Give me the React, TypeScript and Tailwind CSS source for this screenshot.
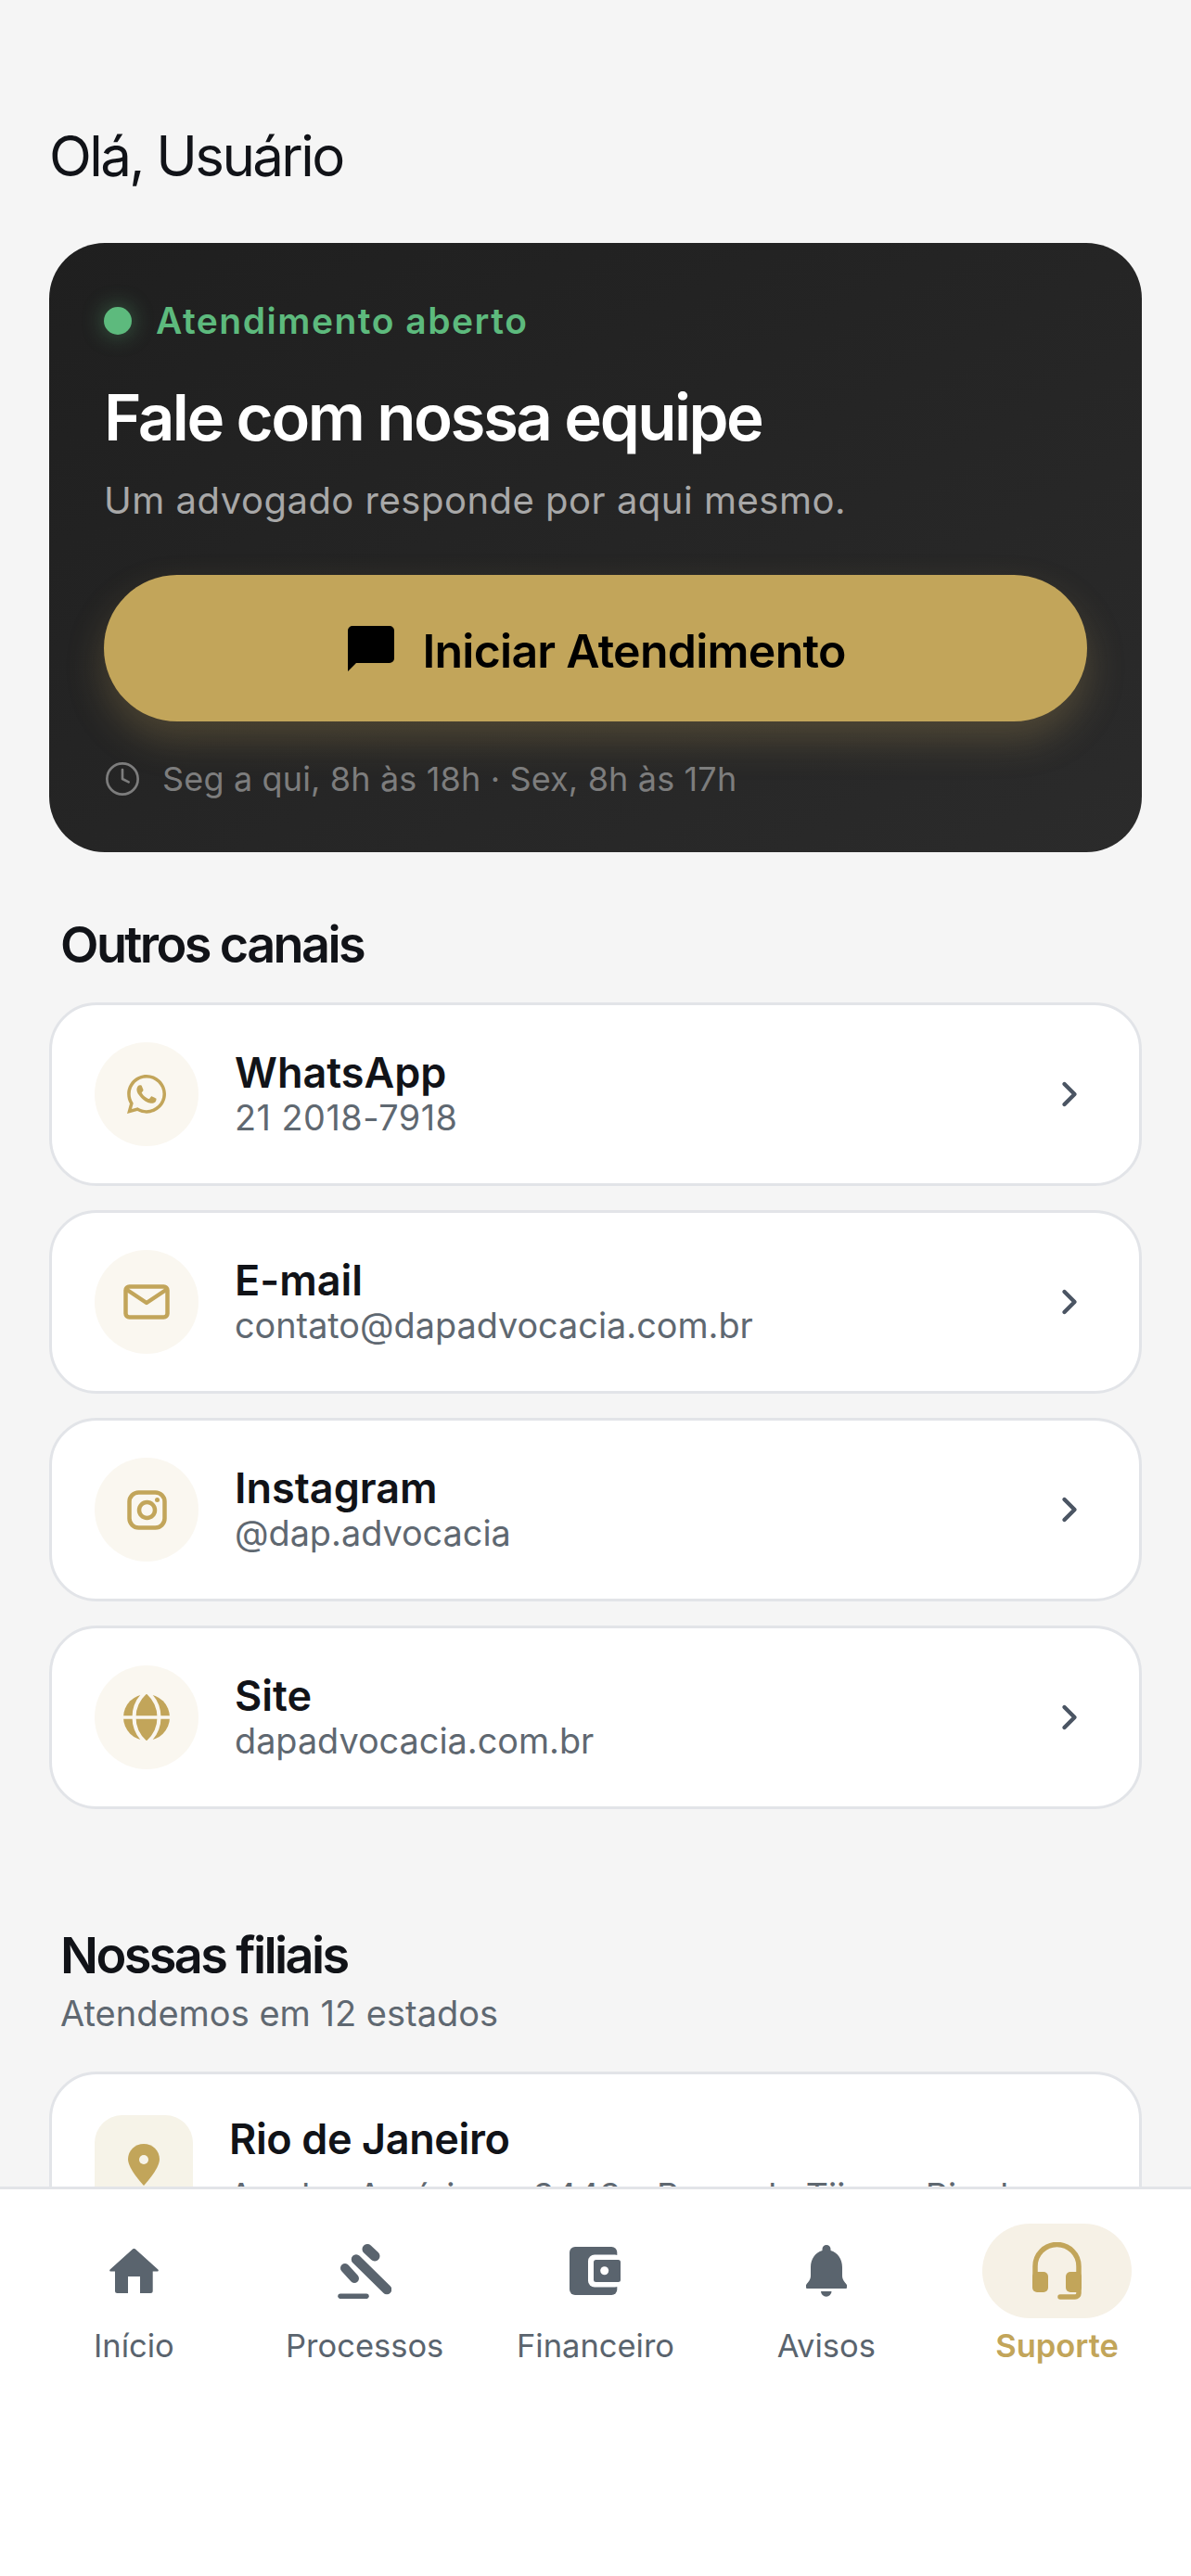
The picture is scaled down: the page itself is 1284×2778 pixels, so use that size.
import { ChevronRight, Clock } from "lucide-react"
import { FaWhatsapp } from "react-icons/fa"
import type { ReactNode } from "react"

const GOLD = "#c2a55a"
const GRAY = "#5a646e"

function MailIcon() {
  return (
    <svg width="50" height="38" viewBox="0 0 50 38" fill="none" stroke={GOLD} strokeWidth="4.5" strokeLinecap="round" strokeLinejoin="round">
      <rect x="2.5" y="2.5" width="45" height="33" rx="4" />
      <path d="M4 6l21 14L46 6" />
    </svg>
  )
}

function InstaIcon() {
  return (
    <svg width="43" height="43" viewBox="0 0 43 43" fill="none" stroke={GOLD} strokeWidth="4.5">
      <rect x="2.5" y="2.5" width="38" height="38" rx="10" />
      <circle cx="21.5" cy="21.5" r="8.5" />
      <circle cx="32.5" cy="10.5" r="2.5" fill={GOLD} stroke="none" />
    </svg>
  )
}

function GlobeIcon() {
  return (
    <svg width="50" height="50" viewBox="0 0 50 50">
      <circle cx="25" cy="25" r="25" fill={GOLD} />
      <path d="M25 -3C7 12 7 38 25 53C43 38 43 12 25 -3Z" fill="none" stroke="#faf7f0" strokeWidth="4" />
      <path d="M0 25H50" stroke="#faf7f0" strokeWidth="3.5" />
    </svg>
  )
}

function PinIcon() {
  return (
    <svg width="34" height="45" viewBox="0 0 34 45">
      <path d="M17 0C7.6 0 0 7.3 0 16.5C0 27 17 45 17 45S34 27 34 16.5C34 7.3 26.4 0 17 0Z" fill={GOLD} />
      <circle cx="17" cy="17" r="5" fill="#f6f3e8" />
    </svg>
  )
}

function ChatIcon() {
  return (
    <svg width="50" height="49" viewBox="0 0 50 49">
      <path d="M5 0H45A5 5 0 0 1 50 5V35A5 5 0 0 1 45 40H9L0 49V5A5 5 0 0 1 5 0Z" fill="#000" />
    </svg>
  )
}

function HomeIcon() {
  return (
    <svg width="53" height="48" viewBox="0 0 53 48">
      <path d="M25 .6a2.2 2.2 0 0 1 3 0L52.4 22.6c.8.8.3 1.9-.8 1.9H46.7V45.5a2.5 2.5 0 0 1-2.5 2.5H33V30H20V48H8.5A2.5 2.5 0 0 1 6 45.5V24.5H1.4c-1.1 0-1.6-1.100-.8-1.900Z" fill={GRAY} />
    </svg>
  )
}

function GavelIcon() {
  return (
    <svg width="58" height="60" viewBox="0 0 58 60" fill="none" stroke={GRAY} strokeLinecap="round">
      <path d="M32 6.500L40 14" strokeWidth="11" />
      <path d="M20 17.500L53 50" strokeWidth="10.500" />
      <path d="M8 27L18 38" strokeWidth="10" />
      <path d="M3 57.300H31" strokeWidth="5.500" />
    </svg>
  )
}

function WalletIcon() {
  return (
    <svg width="55" height="52" viewBox="0 0 55 52">
      <rect x="0" y="0" width="51.300" height="52" rx="6" fill={GRAY} />
      <rect x="20" y="8.500" width="36" height="35" rx="7" fill="#fff" />
      <rect x="26" y="14" width="29" height="24" rx="2.500" fill={GRAY} />
      <circle cx="37.700" cy="25.700" r="4.500" fill="#fff" />
    </svg>
  )
}

function BellIcon() {
  return (
    <svg width="44" height="56" viewBox="0 0 44 56" fill={GRAY}>
      <path d="M22 0A4.500 4.500 0 0 1 26.500 4.500V6C34 8 39 15 39 24V33C39 38 42 40 43.500 42.500A2.500 2.500 0 0 1 41.500 47H2.500A2.500 2.500 0 0 1 .5 42.500C2 40 5 38 5 33V24C5 15 10 8 17.500 6V4.500A4.500 4.500 0 0 1 22 0Z" />
      <path d="M16 50H27.500A5.750 5.750 0 0 1 16 50Z" />
    </svg>
  )
}

function HeadsetIcon() {
  return (
    <svg width="53" height="62" viewBox="0 0 53 62" fill="none">
      <path d="M3 36V26A23.500 23.500 0 0 1 50 26V55A4 4 0 0 1 46 59H30" stroke={GOLD} strokeWidth="5.500" strokeLinecap="round" />
      <rect x="0" y="32" width="17" height="22" rx="5" fill={GOLD} />
      <rect x="36" y="32" width="17" height="22" rx="5" fill={GOLD} />
    </svg>
  )
}

const canais: { nome: string; info: string; icon: ReactNode; numero?: boolean }[] = [
  { nome: "WhatsApp", info: "21 2018-7918", icon: <FaWhatsapp size={48} color={GOLD} />, numero: true },
  { nome: "E-mail", info: "contato@dapadvocacia.com.br", icon: <MailIcon /> },
  { nome: "Instagram", info: "@dap.advocacia", icon: <InstaIcon /> },
  { nome: "Site", info: "dapadvocacia.com.br", icon: <GlobeIcon /> },
]

const abas: { nome: string; icon: ReactNode; ativo?: boolean }[] = [
  { nome: "Início", icon: <HomeIcon /> },
  { nome: "Processos", icon: <GavelIcon /> },
  { nome: "Financeiro", icon: <WalletIcon /> },
  { nome: "Avisos", icon: <BellIcon /> },
  { nome: "Suporte", icon: <HeadsetIcon />, ativo: true },
]

export default function App() {
  return (
    <div className="flex h-[2778px] flex-col overflow-hidden bg-[#f5f5f5] font-['Inter',sans-serif]">
      <main className="min-h-0 flex-1 overflow-hidden px-[53px] pt-[134px]">
        <h1 className="text-[60px] leading-[68px] font-normal tracking-[-2.6px] text-[#111318]">Olá, Usuário</h1>

        {/* CARD ATENDIMENTO */}
        <section className="mt-[60px] h-[657px] rounded-[60px] bg-linear-to-br from-[#1f1f1f] to-[#2b2b2b] px-[59px] pt-[60px]">
          <div className="flex h-[48px] items-center">
            <span className="h-[30px] w-[30px] rounded-full bg-[#5dba7d] shadow-[0_0_24px_rgba(93,186,125,0.45)]" />
            <span className="ml-[26px] text-[39px] leading-[48px] font-semibold tracking-[1.5px] text-[#5dba7d]">Atendimento aberto</span>
          </div>
          <h2 className="mt-[40px] text-[69px] leading-[80px] font-semibold tracking-[-2.5px] text-white">Fale com nossa equipe</h2>
          <p className="mt-[26px] text-[40px] leading-[48px] tracking-[0.5px] text-[#a8a8a8]">Um advogado responde por aqui mesmo.</p>
          <button className="mt-[56px] flex h-[158px] w-full items-center justify-center rounded-full bg-[#c2a55a] pl-[3px] text-[50px] font-semibold tracking-[-0.75px] text-black shadow-[0_20px_40px_rgba(194,165,90,0.25)]">
            <ChatIcon />
            <span className="ml-[30px] pt-[6px]">Iniciar Atendimento</span>
          </button>
          <div className="mt-[42px] flex h-[40px] items-center text-[#7d7d7d]">
            <Clock size={40} strokeWidth={1.6} />
            <span className="ml-[23px] text-[36px] leading-[40px] tracking-[0.15px]">Seg a qui, 8h às 18h · Sex, 8h às 17h</span>
          </div>
        </section>

        {/* OUTROS CANAIS */}
        <h3 className="mt-[66px] px-[12px] text-[54px] leading-[68px] font-semibold tracking-[-2.6px] text-[#111318]">Outros canais</h3>
        <div className="mt-[28px] flex flex-col gap-[26px]">
          {canais.map(c => (
            <div key={c.nome} className="flex h-[198px] items-center rounded-[51px] border-[3px] border-[#e2e4e8] bg-white pr-[53px] pl-[46px]">
              <div className="flex h-[112px] w-[112px] shrink-0 items-center justify-center rounded-full bg-[#faf7f0]">{c.icon}</div>
              <div className="ml-[39px] min-w-0 flex-1">
                <div className="text-[45px] leading-[50px] font-semibold text-[#111318]">{c.nome}</div>
                <div className={c.numero ? "text-[37.8px] leading-[46px] tracking-[0.5px] text-[#5f6871]" : "text-[37.8px] leading-[46px] text-[#5f6871]"}>{c.info}</div>
              </div>
              <ChevronRight size={44} strokeWidth={2.4} color="#4b5563" />
            </div>
          ))}
        </div>

        {/* FILIAIS */}
        <h3 className="mt-[124px] px-[12px] text-[54px] leading-[68px] font-semibold tracking-[-2.6px] text-[#111318]">Nossas filiais</h3>
        <p className="mt-[5px] px-[12px] text-[38px] leading-[46px] text-[#5f6871]">Atendemos em 12 estados</p>
        <div className="mt-[40px] flex gap-[39px] rounded-[51px] border-[3px] border-[#e2e4e8] bg-white px-[46px] pt-[44px] pb-[44px]">
          <div className="flex h-[106px] w-[106px] shrink-0 items-center justify-center rounded-[30px] bg-[#f6f3e8]">
            <PinIcon />
          </div>
          <div className="min-w-0 flex-1">
            <div className="text-[45px] leading-[52px] font-semibold tracking-[-0.4px] text-[#111318]">Rio de Janeiro</div>
            <div className="mt-[13px] text-[37.6px] leading-[46px] text-[#5f6871]">Av. das Américas, 3443 - Barra da Tijuca, Rio de Janeiro</div>
          </div>
        </div>
      </main>

      {/* NAV */}
      <nav className="flex h-[420px] shrink-0 border-t-[3px] border-[#e2e4e8] bg-white px-[20px] pt-[37px]">
        {abas.map(a => (
          <div key={a.nome} className="flex flex-1 flex-col items-center">
            <div className={a.ativo ? "flex h-[102px] w-[161px] items-center justify-center rounded-full bg-[#f6f1e6]" : "flex h-[102px] w-[161px] items-center justify-center"}>
              {a.icon}
            </div>
            <span className={a.ativo ? "mt-[8px] text-[34.5px] leading-[44px] font-semibold text-[#c2a55a]" : "mt-[8px] text-[34.5px] leading-[44px] text-[#5a646e]"}>{a.nome}</span>
          </div>
        ))}
      </nav>
    </div>
  )
}
